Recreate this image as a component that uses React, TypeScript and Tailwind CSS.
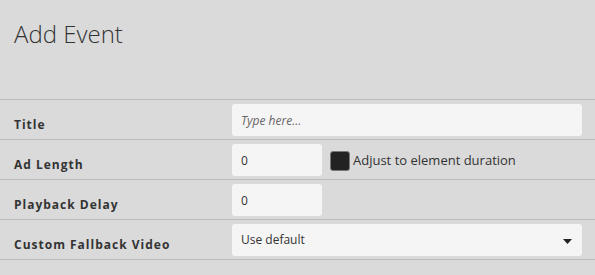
const rowLabel = 'w-[232px] shrink-0 pl-[14px] pt-[17px] text-[12px] font-bold leading-[16px] tracking-[1px] text-[#333]'
const field = 'h-[32px] rounded-[3px] bg-[#f5f5f5] px-[9px] text-[12px] text-[#333] outline-none'

export default function App() {
  return (
    <div className="h-[275px] w-[595px] overflow-hidden bg-[#dadada]" style={{ fontFamily: '"Open Sans", "Liberation Sans", sans-serif' }}>
      <div className="h-[100px] border-b border-[#bcbcbc] pl-[14px] pt-[18px]">
        <h1 className="text-[24px] font-light leading-[32px] text-[#333]">Add Event</h1>
      </div>

      <div className="flex h-[40px] border-b border-[#bcbcbc]">
        <div className={rowLabel}>Title</div>
        <div className="pt-[4px]">
          <input className={`${field} w-[350px] italic placeholder:text-[#666]`} placeholder="Type here..." />
        </div>
      </div>

      <div className="flex h-[40px] border-b border-[#bcbcbc]">
        <div className={rowLabel}>Ad Length</div>
        <div className="flex items-start pt-[4px]">
          <input className={`${field} w-[90px]`} defaultValue="0" />
          <div className="ml-[8px] mt-[7px] flex items-start gap-[3px]">
            <span className="h-[20px] w-[20px] rounded-[3px] border border-[#777] bg-[#222]" />
            <span className="text-[13px] leading-[18px] text-[#333]">Adjust to element duration</span>
          </div>
        </div>
      </div>

      <div className="flex h-[40px] border-b border-[#bcbcbc]">
        <div className={rowLabel}>Playback Delay</div>
        <div className="pt-[4px]">
          <input className={`${field} w-[90px]`} defaultValue="0" />
        </div>
      </div>

      <div className="flex h-[40px] border-b border-[#bcbcbc]">
        <div className={rowLabel}>Custom Fallback Video</div>
        <div className="pt-[4px]">
          <div className={`${field} flex w-[350px] items-center justify-between pr-[10px]`}>
            <span>Use default</span>
            <svg width="9" height="5" viewBox="0 0 9 5" className="mt-[2px]">
              <path d="M0 0h9L4.5 5z" fill="#222" />
            </svg>
          </div>
        </div>
      </div>
    </div>
  )
}
